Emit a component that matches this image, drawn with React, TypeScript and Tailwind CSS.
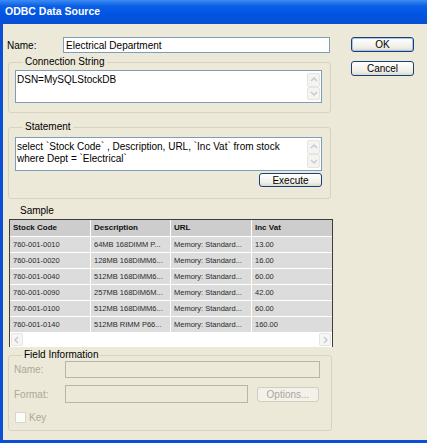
import React from "react";

const rows = [
  ["760-001-0010", "64MB 168DIMM P...", "Memory: Standard...", "13.00"],
  ["760-001-0020", "128MB 168DIMM6...", "Memory: Standard...", "16.00"],
  ["760-001-0040", "512MB 168DIMM6...", "Memory: Standard...", "60.00"],
  ["760-001-0090", "257MB 168DIM6M...", "Memory: Standard...", "42.00"],
  ["760-001-0100", "512MB 168DIMM6...", "Memory: Standard...", "60.00"],
  ["760-001-0140", "512MB RIMM P66...", "Memory: Standard...", "160.00"],
];

const cols = ["w-[81px]", "w-[80px]", "w-[81px]", "flex-1"];

function Chevron({ dir }: { dir: "up" | "down" | "left" | "right" }) {
  const d = {
    up: "M2 6 L5 3 L8 6",
    down: "M2 4 L5 7 L8 4",
    left: "M6 2 L3 5 L6 8",
    right: "M4 2 L7 5 L4 8",
  }[dir];
  return (
    <svg width="10" height="10" viewBox="0 0 10 10">
      <path d={d} fill="none" stroke="#c3cbd9" strokeWidth="1.5" />
    </svg>
  );
}

function VScroll() {
  return (
    <div className="w-[14px] flex flex-col justify-between py-[2px] pr-[1px]">
      <div className="h-[14px] flex items-center justify-center bg-[#f4f4f0] border border-[#e6e5de] rounded-[2px]">
        <Chevron dir="up" />
      </div>
      <div className="h-[14px] flex items-center justify-center bg-[#f4f4f0] border border-[#e6e5de] rounded-[2px]">
        <Chevron dir="down" />
      </div>
    </div>
  );
}

function Group({ label, className, children }: { label: string; className?: string; children: React.ReactNode }) {
  return (
    <fieldset className={`border border-[#d6d3c3] rounded-[3px] ${className ?? ""}`}>
      <legend className="ml-[8px] px-[2px] leading-[12px]">{label}</legend>
      {children}
    </fieldset>
  );
}

function Button({ children, def, disabled, className }: { children: React.ReactNode; def?: boolean; disabled?: boolean; className?: string }) {
  return (
    <div
      className={`flex items-center justify-center rounded-[3px] border ${
        disabled
          ? "border-[#cfcdbf] text-[#aca899] bg-[#f2f1ea]"
          : def
          ? "border-[#1b3f7a] shadow-[inset_0_0_0_1px_#a9c2ea] bg-[linear-gradient(to_bottom,#ffffff,#f0efe8_70%,#dcdad0)]"
          : "border-[#1b3f7a] bg-[linear-gradient(to_bottom,#ffffff,#f0efe8_70%,#dcdad0)]"
      } ${className ?? ""}`}
    >
      {children}
    </div>
  );
}

export default function App() {
  return (
    <div className="w-[427px] h-[443px] flex flex-col bg-[#ece9d8] font-['Liberation_Sans',Arial,sans-serif] text-[10px] text-black overflow-hidden">
      <div className="h-[24px] shrink-0 flex items-center pl-[5px] text-white font-bold text-[10.5px] bg-[linear-gradient(to_bottom,#3d8cf3,#0b5fe6_25%,#0054e3_60%,#0a4fd2)]">
        ODBC Data Source
      </div>
      <div className="flex-1 flex border-l-[3px] border-b-[3px] border-[#0a4fd6]">
        {/* left column */}
        <div className="w-[330px] pl-[5px] flex flex-col">
          <div className="mt-[13px] h-[16px] flex items-center">
            <span className="w-[56px] -ml-px">Name:</span>
            <div className="w-[267px] h-[16px] bg-white border border-[#7f9db9] flex items-center px-[2px]">
              Electrical Department
            </div>
          </div>

          <Group label="Connection String" className="mt-[3px] w-[323px] pl-[6px] pr-[8px] pb-[9px]">
            <div className="mt-[2px] h-[33px] bg-white border border-[#7f9db9] flex">
              <div className="flex-1 px-[1px] pt-[3px] leading-[12px]">DSN=MySQLStockDB</div>
              <VScroll />
            </div>
          </Group>

          <Group label="Statement" className="mt-[8px] w-[323px] pl-[6px] pr-[8px] pb-[11px]">
            <div className="mt-[4px] h-[34px] bg-white border border-[#7f9db9] flex">
              <div className="flex-1 px-[1px] pt-[3px] leading-[12px]">
                select `Stock Code` , Description, URL, `Inc Vat` from stock
                <br />
                where Dept = `Electrical`
              </div>
              <VScroll />
            </div>
            <div className="flex justify-end mt-[2px]">
              <Button className="w-[63px] h-[14px]">Execute</Button>
            </div>
          </Group>

          <div className="mt-[6px] pl-[12px] leading-[12px]">Sample</div>
          <div className="mt-[2px] ml-px w-[324px] border-x border-t border-[#3c3c3c] flex flex-col text-[7.5px]">
            <div className="h-[16px] flex bg-[#cdcdcd] font-bold text-[8px] text-[#111]">
              {["Stock Code", "Description", "URL", "Inc Vat"].map((h, i) => (
                <div key={h} className={`${cols[i]} flex items-center pl-[3px] border-r border-white last:border-r-0`}>
                  {h}
                </div>
              ))}
            </div>
            {rows.map((r) => (
              <div key={r[0]} className="h-[16px] flex bg-[#dcdcdc] border-t border-white text-[#2a2a2a]">
                {r.map((c, i) => (
                  <div key={i} className={`${cols[i]} flex items-center pl-[3px] border-r border-white last:border-r-0`}>
                    {c}
                  </div>
                ))}
              </div>
            ))}
            <div className="h-[15px] bg-white flex justify-between items-center px-px">
              <div className="w-[12px] h-[13px] flex items-center justify-center border border-[#e6e5de] bg-[#f6f6f3] rounded-[2px]">
                <Chevron dir="left" />
              </div>
              <div className="w-[12px] h-[13px] flex items-center justify-center border border-[#e6e5de] bg-[#f6f6f3] rounded-[2px]">
                <Chevron dir="right" />
              </div>
            </div>
          </div>

          <Group label="Field Information" className="mt-[2px] w-[324px] pl-[5px] pr-[11px] pb-[7px]">
            <div className="mt-[0px] flex items-center h-[17px] text-[#aca899]">
              <span className="w-[51px]">Name:</span>
              <div className="flex-1 h-[17px] border border-[#b7b5a7] bg-[#ece9d8]" />
            </div>
            <div className="mt-[7px] flex items-center h-[18px] text-[#aca899]">
              <span className="w-[51px]">Format:</span>
              <div className="w-[183px] h-[18px] border border-[#b7b5a7] bg-[#ece9d8]" />
              <Button disabled className="ml-[9px] w-[62px] h-[15px]">Options...</Button>
            </div>
            <div className="mt-[9px] flex items-center h-[11px] text-[#aca899]">
              <div className="w-[11px] h-[11px] border border-[#d8d6ca] bg-[#fbfbf8] ml-px" />
              <span className="ml-[3px]">Key</span>
            </div>
          </Group>
        </div>

        {/* right column */}
        <div className="flex flex-col pl-[18px]">
          <Button def className="mt-[13px] w-[63px] h-[15px]">OK</Button>
          <Button className="mt-[9px] w-[63px] h-[15px]">Cancel</Button>
        </div>
      </div>
    </div>
  );
}
